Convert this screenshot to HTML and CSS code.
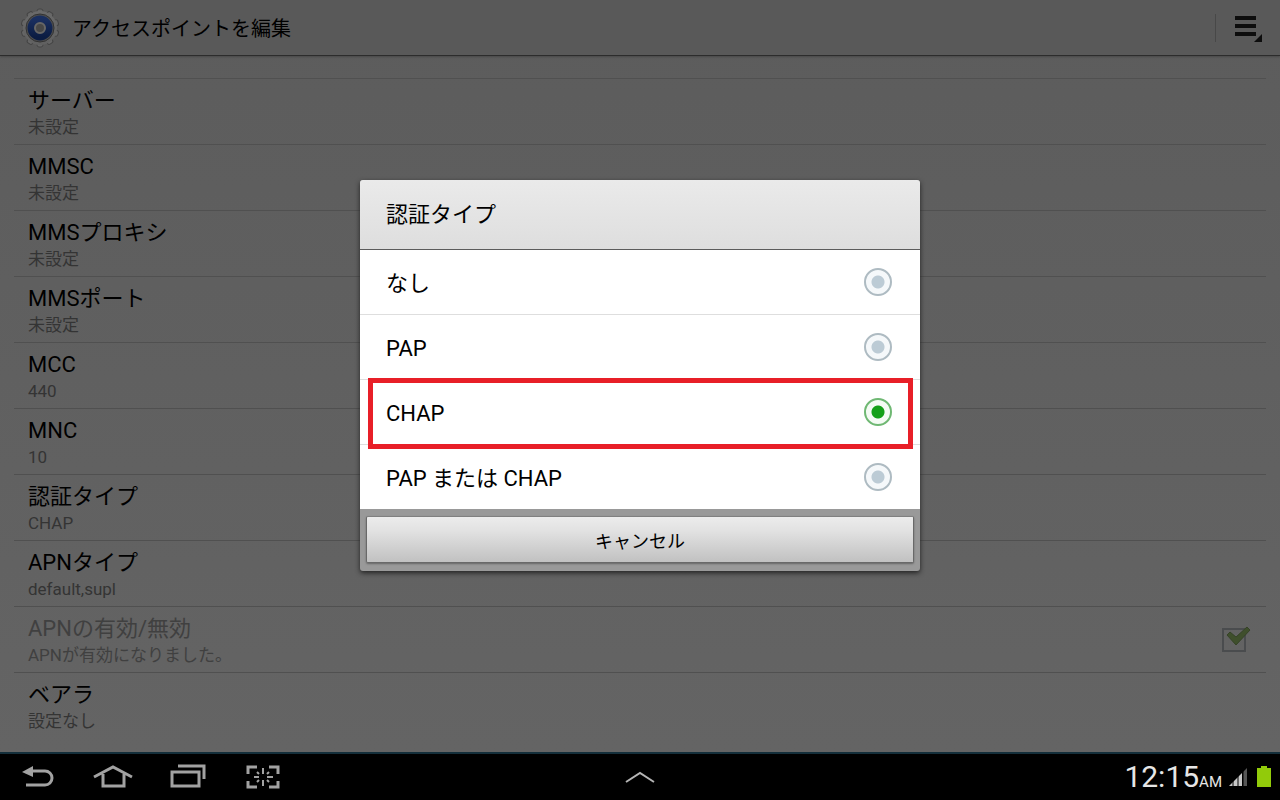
FILE: index.html
```html
<!DOCTYPE html>
<html lang="ja">
<head>
  <meta charset="UTF-8">
  <meta name="viewport" content="width=device-width, initial-scale=1">
  <title>アクセスポイントを編集</title>
  <link rel="stylesheet" href="styles.css">
</head>
<body>
  <div class="screen">
    <header class="action-bar">
      <svg class="gear" viewBox="0 0 40 40" aria-hidden="true">
        <defs>
          <linearGradient id="metal" x1="0" y1="0" x2="0" y2="1">
            <stop offset="0" stop-color="#6a6a6a"/>
            <stop offset="1" stop-color="#606060"/>
          </linearGradient>
          <linearGradient id="blue" x1="0" y1="0" x2="0" y2="1">
            <stop offset="0" stop-color="#1a2f60"/>
            <stop offset="1" stop-color="#0b1c42"/>
          </linearGradient>
        </defs>
        <g fill="#666" stroke="#444" stroke-width="1">
          <rect x="17" y="1" width="6" height="38" rx="2"/>
          <rect x="17" y="1" width="6" height="38" rx="2" transform="rotate(36 20 20)"/>
          <rect x="17" y="1" width="6" height="38" rx="2" transform="rotate(72 20 20)"/>
          <rect x="17" y="1" width="6" height="38" rx="2" transform="rotate(108 20 20)"/>
          <rect x="17" y="1" width="6" height="38" rx="2" transform="rotate(144 20 20)"/>
        </g>
        <circle cx="20" cy="20" r="17" fill="url(#metal)"/>
        <circle cx="20" cy="20" r="14" fill="#4e4e4e" stroke="#333" stroke-width="1"/>
        <circle cx="20" cy="20" r="9" fill="none" stroke="url(#blue)" stroke-width="7"/>
        <circle cx="20" cy="20" r="5" fill="#474747" stroke="#666" stroke-width="2"/>
      </svg>
      <h1>アクセスポイントを編集</h1>
      <button class="menu-btn" type="button" aria-label="メニュー">
        <svg width="28" height="28" viewBox="0 0 28 28" aria-hidden="true">
          <path d="M0 2h21v4H0zM0 10h21v4H0zM0 18h21v4H0zM27 20v8h-8z" fill="#0d0d0d"/>
        </svg>
      </button>
    </header>

    <main class="content">
      <ul class="settings">
        <li><div class="name">サーバー</div><div class="value">未設定</div></li>
        <li><div class="name">MMSC</div><div class="value">未設定</div></li>
        <li><div class="name">MMSプロキシ</div><div class="value">未設定</div></li>
        <li><div class="name">MMSポート</div><div class="value">未設定</div></li>
        <li><div class="name">MCC</div><div class="value">440</div></li>
        <li><div class="name">MNC</div><div class="value">10</div></li>
        <li><div class="name">認証タイプ</div><div class="value">CHAP</div></li>
        <li><div class="name">APNタイプ</div><div class="value">default,supl</div></li>
        <li class="with-check disabled">
          <label for="apnEnabled">
            <span class="name">APNの有効/無効</span>
            <span class="value">APNが有効になりました。</span>
          </label>
          <span class="check">
            <input type="checkbox" id="apnEnabled" checked disabled>
            <svg class="tick" viewBox="0 0 26 20" aria-hidden="true">
              <path d="M2 9l3-3 6 5L22 1l3 3L11 19z" fill="#3f4f2c" stroke="#364328" stroke-width="1"/>
            </svg>
          </span>
        </li>
        <li><div class="name">ベアラ</div><div class="value">設定なし</div></li>
      </ul>
    </main>

    <div class="overlay">
      <form class="dialog" role="dialog" aria-labelledby="dialogTitle">
        <h2 id="dialogTitle">認証タイプ</h2>
        <div class="options">
          <label class="option" for="authNone"><span>なし</span><input type="radio" name="auth" id="authNone"></label>
          <label class="option" for="authPap"><span>PAP</span><input type="radio" name="auth" id="authPap"></label>
          <label class="option marked" for="authChap"><span>CHAP</span><input type="radio" name="auth" id="authChap" checked></label>
          <label class="option" for="authBoth"><span>PAP または CHAP</span><input type="radio" name="auth" id="authBoth"></label>
        </div>
        <div class="dialog-footer">
          <button class="cancel" type="button">キャンセル</button>
        </div>
      </form>
    </div>
  </div>

  <nav class="system-bar">
    <div class="keys">
      <button type="button" aria-label="戻る">
        <svg width="36" height="28" viewBox="0 0 36 28" aria-hidden="true">
          <path d="M2 9l11-6v11z" fill="#a2a2a2"/>
          <path d="M12 8h13a7 7 0 0 1 0 14H6" fill="none" stroke="#a2a2a2" stroke-width="3"/>
        </svg>
      </button>
      <button type="button" aria-label="ホーム">
        <svg width="40" height="28" viewBox="0 0 40 28" aria-hidden="true">
          <path d="M1 14L20 4l19 10M10 11v12h21V11" fill="none" stroke="#a2a2a2" stroke-width="3"/>
        </svg>
      </button>
      <button type="button" aria-label="履歴">
        <svg width="36" height="28" viewBox="0 0 36 28" aria-hidden="true">
          <path d="M2 9h27v14H2zM8 3h26v13" fill="none" stroke="#a2a2a2" stroke-width="3"/>
        </svg>
      </button>
      <button type="button" aria-label="画面キャプチャ">
        <svg width="36" height="28" viewBox="0 0 36 28" aria-hidden="true">
          <path d="M3 11V4h9M24 4h9v7M33 18v6h-9M12 24H3v-6" fill="none" stroke="#a2a2a2" stroke-width="3"/>
          <path d="M18 5v6M18 17v6M9 14h5M22 14h6M12 9l2 2M24 9l-2 2M12 19l2-2M24 19l-2-2" fill="none" stroke="#a2a2a2" stroke-width="2"/>
        </svg>
      </button>
    </div>
    <button class="tray" type="button" aria-label="ミニアプリ">
      <svg width="32" height="16" viewBox="0 0 32 16" aria-hidden="true">
        <path d="M2 13l14-9 14 9" fill="none" stroke="#b5b5b5" stroke-width="2"/>
      </svg>
    </button>
    <div class="status">
      <span class="clock">12:15<small>AM</small></span>
      <svg class="signal" width="20" height="20" viewBox="0 0 20 20" aria-hidden="true">
        <path d="M1 19L14 6v13z" fill="#c8c8c8"/>
        <path d="M15 5l4-4v18h-4z" fill="#555"/>
        <path d="M5 0v20M10 0v20M15 0v20" stroke="#000" stroke-width="1"/>
      </svg>
      <svg class="battery" width="16" height="22" viewBox="0 0 16 22" aria-hidden="true">
        <path d="M5 0h6v2h4v19H1V2h4z" fill="#92cb0a"/>
      </svg>
    </div>
  </nav>
</body>
</html>
```
FILE: styles.css
```css
* {
  box-sizing: border-box;
}
body {
  margin: 0;
  min-height: 100vh;
  display: flex;
  flex-direction: column;
  font-family: Roboto, "Noto Sans CJK JP", sans-serif;
  color: #000;
  background: #000;
}
button {
  font: inherit;
  color: inherit;
  padding: 0;
  border: 0;
  background: none;
  cursor: pointer;
}
svg {
  display: block;
}

/* settings page */
.screen {
  position: relative;
  flex: 1;
  display: flex;
  flex-direction: column;
  background: linear-gradient(#5c5c5c, #606060 50%, #646464);
}
.action-bar {
  display: flex;
  align-items: center;
  height: 56px;
  padding: 0 17px 0 20px;
  background: #595959;
  border-bottom: 1px solid #2c2c2c;
  box-shadow: 0 1px 2px #484848;
}
.gear {
  width: 40px;
  height: 40px;
}
.action-bar h1 {
  flex: 1;
  margin: 0 0 0 12px;
  font-size: 20px;
  font-weight: 400;
}
.menu-btn {
  padding-left: 19px;
  border-left: 1px solid #484848;
}
.content {
  flex: 1;
  padding: 22px 14px 12px;
}
.settings {
  margin: 0;
  padding: 0;
  list-style: none;
}
.settings li {
  padding: 7px 14px 6px;
  border-top: 1px solid #505050;
}
.name, .value {
  display: block;
}
.name {
  font-size: 22px;
  line-height: 30px;
}
.value {
  font-size: 17px;
  line-height: 22px;
  color: #343434;
}
.with-check {
  display: flex;
  justify-content: space-between;
  align-items: center;
}
.disabled .name,
.disabled .value {
  color: #404040;
}
.check {
  position: relative;
  margin-right: 6px;
}
.check input {
  appearance: none;
  display: block;
  width: 24px;
  height: 24px;
  margin: 0;
  border: 2px solid #4a4c4e;
}
.tick {
  position: absolute;
  left: 3px;
  top: -2px;
  width: 26px;
  height: 20px;
}

/* dialog */
.overlay {
  position: absolute;
  inset: 0;
  display: flex;
  align-items: center;
  justify-content: center;
  padding-bottom: 1px;
}
.dialog {
  width: 560px;
  max-width: 90%;
  background: #999;
  border-radius: 3px;
  box-shadow: 0 2px 5px #222;
}
.dialog h2 {
  margin: 0;
  padding: 0 26px;
  font-size: 22px;
  font-weight: 400;
  line-height: 69px;
  background: linear-gradient(#eaeaea, #dedede);
  border-bottom: 1px solid #5c5c5c;
  border-radius: 3px 3px 0 0;
}
.options {
  background: #fff;
}
.option {
  position: relative;
  display: flex;
  align-items: center;
  justify-content: space-between;
  height: 65px;
  padding: 0 28px 0 26px;
  font-size: 22px;
  line-height: 28px;
  border-bottom: 1px solid #dedede;
}
.option:last-child {
  height: 64px;
  border-bottom: 0;
}
.option span {
  padding-top: 4px;
}
.option input {
  appearance: none;
  width: 28px;
  height: 28px;
  margin: 0;
  border: 2px solid #aebbc2;
  border-radius: 50%;
  background: radial-gradient(circle, #bccbd5 6px, #f5f8fa 7px);
}
.option input:checked {
  border-color: #6fb873;
  background: radial-gradient(circle, #14a019 6px, #f4fbf4 7px);
}
/* red frame round the option to choose */
.marked::after {
  content: "";
  position: absolute;
  z-index: 1;
  inset: -2px 7px -5px 8px;
  border: 5px solid #e81f28;
}
.dialog-footer {
  padding: 7px 6px 8px;
}
.cancel {
  display: block;
  width: 100%;
  height: 47px;
  font-size: 18px;
  background: linear-gradient(#ececec, #e2e2e2 30%, #c1c1c1);
  border: 1px solid #696969;
  border-top-color: #808080;
  border-radius: 2px;
  box-shadow: 0 1px 2px #666;
}

/* bottom bar */
.system-bar {
  display: grid;
  grid-template-columns: minmax(0, 1fr) auto minmax(0, 1fr);
  align-items: center;
  height: 48px;
  background: #000;
  border-top: 2px solid #142f3b;
}
.keys {
  display: flex;
  align-items: center;
}
.keys button {
  display: flex;
  justify-content: center;
  width: 75px;
}
.status {
  display: flex;
  align-items: center;
  justify-content: flex-end;
  gap: 8px;
  padding-right: 8px;
  color: #e6e6e6;
}
.clock {
  margin-right: -2px;
  font-size: 30px;
  line-height: 40px;
}
.clock small {
  font-size: 15px;
  line-height: 16px;
}
```
